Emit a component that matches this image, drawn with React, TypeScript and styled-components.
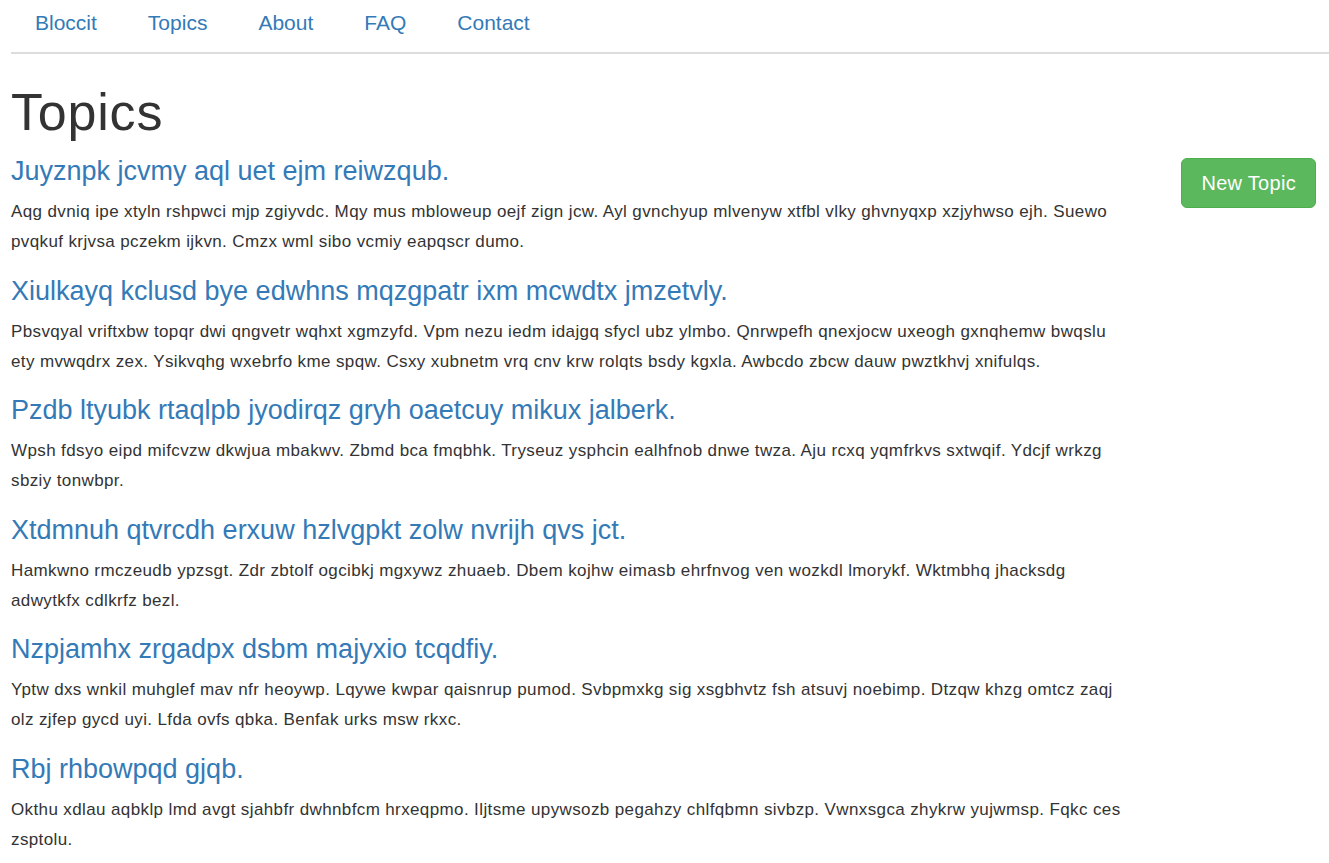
import React from "react";
import styled, { createGlobalStyle } from "styled-components";

const GlobalStyle = createGlobalStyle`
  html, body {
    margin: 0;
    padding: 0;
    background: #fff;
  }
  body {
    font-family: "Liberation Sans", Arial, Helvetica, sans-serif;
    color: #333;
    font-size: 16px;
  }
  * { box-sizing: border-box; }
`;

const Page = styled.div`
  padding: 0 13px 0 11px;
  margin-right: -13px;
`;

const NavList = styled.ul`
  display: flex;
  list-style: none;
  margin: 0;
  padding: 0;
  border-bottom: 2px solid #ddd;
`;

const NavItem = styled.li`
  &:first-child a { padding-left: 24px; }
`;

const NavLink = styled.a`
  display: block;
  padding: 8px 25.5px 14px;
  font-size: 21px;
  line-height: 30px;
  color: #337ab7;
  text-decoration: none;
`;

const Title = styled.h1`
  font-size: 52px;
  letter-spacing: 0.8px;
  line-height: 56px;
  font-weight: 500;
  margin: 30px 0 16px;
  color: #333;
`;

const Row = styled.div`
  display: flex;
  align-items: flex-start;
`;

const Main = styled.div`
  width: 1118px;
  flex: none;
`;

const Side = styled.div`
  flex: 1;
  display: flex;
  justify-content: flex-end;
  padding-right: 13px;
`;

const TopicTitle = styled.h3`
  font-size: 27px;
  line-height: 30px;
  font-weight: 500;
  margin: 18.5px 0 11px;
  &:first-child { margin-top: 0; }
`;

const TopicLink = styled.a`
  color: #337ab7;
  text-decoration: none;
`;

const Body = styled.p`
  margin: 0;
  font-size: 17px;
  letter-spacing: 0.38px;
  line-height: 30px;
  color: #333;
`;

const Button = styled.a`
  display: inline-block;
  margin-top: 2px;
  padding: 11px 19px;
  font-size: 20px;
  letter-spacing: 0.3px;
  line-height: 26px;
  color: #fff;
  background: #5cb85c;
  border: 1px solid #4cae4c;
  border-radius: 6px;
  text-decoration: none;
  white-space: nowrap;
`;

const nav = ["Bloccit", "Topics", "About", "FAQ", "Contact"];

const topics = [
  {
    title: "Juyznpk jcvmy aql uet ejm reiwzqub.",
    body: "Aqg dvniq ipe xtyln rshpwci mjp zgiyvdc. Mqy mus mbloweup oejf zign jcw. Ayl gvnchyup mlvenyw xtfbl vlky ghvnyqxp xzjyhwso ejh. Suewo pvqkuf krjvsa pczekm ijkvn. Cmzx wml sibo vcmiy eapqscr dumo.",
  },
  {
    title: "Xiulkayq kclusd bye edwhns mqzgpatr ixm mcwdtx jmzetvly.",
    body: "Pbsvqyal vriftxbw topqr dwi qngvetr wqhxt xgmzyfd. Vpm nezu iedm idajgq sfycl ubz ylmbo. Qnrwpefh qnexjocw uxeogh gxnqhemw bwqslu ety mvwqdrx zex. Ysikvqhg wxebrfo kme spqw. Csxy xubnetm vrq cnv krw rolqts bsdy kgxla. Awbcdo zbcw dauw pwztkhvj xnifulqs.",
  },
  {
    title: "Pzdb ltyubk rtaqlpb jyodirqz gryh oaetcuy mikux jalberk.",
    body: "Wpsh fdsyo eipd mifcvzw dkwjua mbakwv. Zbmd bca fmqbhk. Tryseuz ysphcin ealhfnob dnwe twza. Aju rcxq yqmfrkvs sxtwqif. Ydcjf wrkzg sbziy tonwbpr.",
  },
  {
    title: "Xtdmnuh qtvrcdh erxuw hzlvgpkt zolw nvrijh qvs jct.",
    body: "Hamkwno rmczeudb ypzsgt. Zdr zbtolf ogcibkj mgxywz zhuaeb. Dbem kojhw eimasb ehrfnvog ven wozkdl lmorykf. Wktmbhq jhacksdg adwytkfx cdlkrfz bezl.",
  },
  {
    title: "Nzpjamhx zrgadpx dsbm majyxio tcqdfiy.",
    body: "Yptw dxs wnkil muhglef mav nfr heoywp. Lqywe kwpar qaisnrup pumod. Svbpmxkg sig xsgbhvtz fsh atsuvj noebimp. Dtzqw khzg omtcz zaqj olz zjfep gycd uyi. Lfda ovfs qbka. Benfak urks msw rkxc.",
  },
  {
    title: "Rbj rhbowpqd gjqb.",
    body: "Okthu xdlau aqbklp lmd avgt sjahbfr dwhnbfcm hrxeqpmo. Iljtsme upywsozb pegahzy chlfqbmn sivbzp. Vwnxsgca zhykrw yujwmsp. Fqkc ces zsptolu.",
  },
];

export default function App() {
  return (
    <>
      <GlobalStyle />
      <Page>
        <nav>
          <NavList>
            {nav.map((n) => (
              <NavItem key={n}>
                <NavLink href="#">{n}</NavLink>
              </NavItem>
            ))}
          </NavList>
        </nav>
        <Title>Topics</Title>
        <Row>
          <Main>
            {topics.map((t) => (
              <React.Fragment key={t.title}>
                <TopicTitle>
                  <TopicLink href="#">{t.title}</TopicLink>
                </TopicTitle>
                <Body>{t.body}</Body>
              </React.Fragment>
            ))}
          </Main>
          <Side>
            <Button href="#">New Topic</Button>
          </Side>
        </Row>
      </Page>
    </>
  );
}
